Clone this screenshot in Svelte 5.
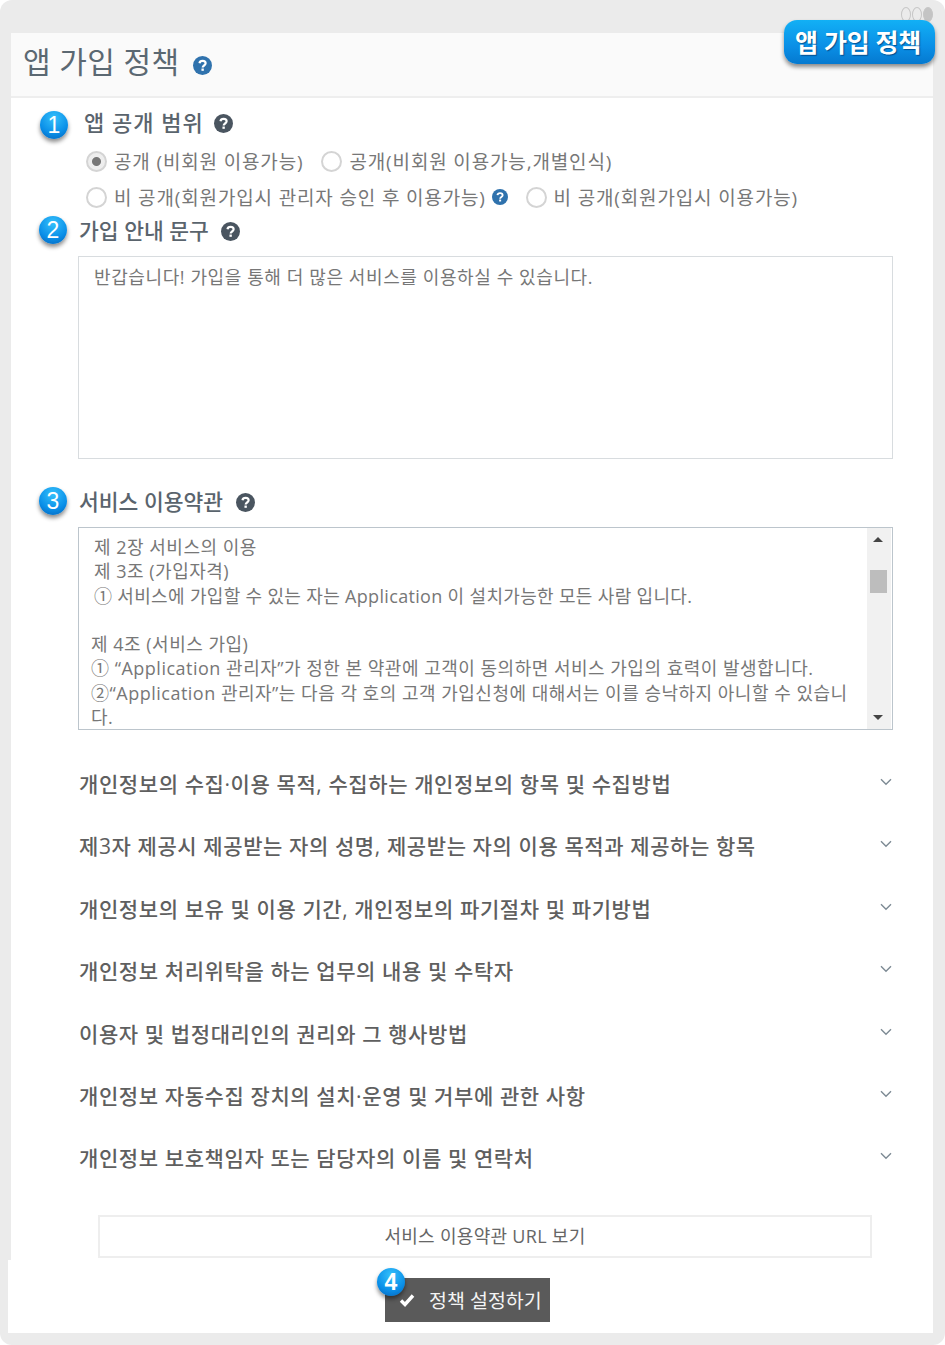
<script>
  const rows = [
    '개인정보의 수집·이용 목적, 수집하는 개인정보의 항목 및 수집방법',
    '제3자 제공시 제공받는 자의 성명, 제공받는 자의 이용 목적과 제공하는 항목',
    '개인정보의 보유 및 이용 기간, 개인정보의 파기절차 및 파기방법',
    '개인정보 처리위탁을 하는 업무의 내용 및 수탁자',
    '이용자 및 법정대리인의 권리와 그 행사방법',
    '개인정보 자동수집 장치의 설치·운영 및 거부에 관한 사항',
    '개인정보 보호책임자 또는 담당자의 이름 및 연락처'
  ];
</script>

{#snippet help(cls)}
  <svg class="help {cls}" viewBox="0 0 20 20" aria-hidden="true">
    <circle cx="10" cy="10" r="10" fill="currentColor" />
    <path d="M6.8 7.6c.3-1.7 1.6-2.5 3.3-2.5 1.8 0 3.2 1 3.2 2.6 0 2.3-3.1 2.3-3.1 4.4" fill="none" stroke="#fff" stroke-width="2.3" />
    <rect x="8.9" y="13.2" width="2.5" height="2.4" fill="#fff" />
  </svg>
{/snippet}

{#snippet radio(checked)}
  <span class="radio" class:checked></span>
{/snippet}

<div class="frame">
  <div class="dots"><i></i><i></i><i></i></div>
  <div class="pill">앱 가입 정책</div>

  <header class="head">
    <h1>앱 가입 정책</h1>
    {@render help('blue title-help')}
  </header>

  <main class="body">
    <section class="scope">
      <span class="badge b1">1</span>
      <h2>앱 공개 범위 {@render help('dark')}</h2>
      <div class="radios">
        <label class="first">{@render radio(true)}공개 (비회원 이용가능)</label>
        <label>{@render radio(false)}공개(비회원 이용가능,개별인식)</label>
      </div>
      <div class="radios">
        <label class="first">{@render radio(false)}비 공개(회원가입시 관리자 승인 후 이용가능) {@render help('blue small')}</label>
        <label>{@render radio(false)}비 공개(회원가입시 이용가능)</label>
      </div>
    </section>

    <section class="intro">
      <span class="badge b2">2</span>
      <h2>가입 안내 문구 {@render help('dark')}</h2>
      <div class="textbox">반갑습니다! 가입을 통해 더 많은 서비스를 이용하실 수 있습니다.</div>
    </section>

    <section class="terms">
      <span class="badge b3">3</span>
      <h2>서비스 이용약관 {@render help('dark')}</h2>
      <div class="scrollbox">
        <div class="scrolltext">
          <p class="in">제 2장 서비스의 이용</p>
          <p class="in">제 3조 (가입자격)</p>
          <p class="in tight">① 서비스에 가입할 수 있는 자는 Application 이 설치가능한 모든 사람 입니다.</p>
          <p>&nbsp;</p>
          <p>제 4조 (서비스 가입)</p>
          <p>① “Application 관리자”가 정한 본 약관에 고객이 동의하면 서비스 가입의 효력이 발생합니다.</p>
          <p>②“Application 관리자”는 다음 각 호의 고객 가입신청에 대해서는 이를 승낙하지 아니할 수 있습니</p>
          <p>다.</p>
        </div>
        <div class="scrollbar">
          <span class="up"></span>
          <span class="thumb"></span>
          <span class="down"></span>
        </div>
      </div>
    </section>

    <section class="accordion">
      {#each rows as row}
        <div class="row">
          <span>{row}</span>
          <svg viewBox="0 0 12 8" aria-hidden="true"><path d="M1 1.2l5 5 5-5" fill="none" stroke="#7d8a94" stroke-width="1.4" /></svg>
        </div>
      {/each}
    </section>

    <div class="url">서비스 이용약관 URL 보기</div>
  </main>

  <footer class="foot">
    <div class="submit">
      <span class="badge b4">4</span>
      <svg viewBox="0 0 16 14" aria-hidden="true"><path d="M2 7.5l4 4 8-9" fill="none" stroke="#fff" stroke-width="3.4" /></svg>
      정책 설정하기
    </div>
  </footer>
</div>

<style>
  :global(body) {
    background: #fff;
  }

  .frame {
    position: relative;
    box-sizing: border-box;
    width: 945px;
    height: 1345px;
    padding: 33px 12px 12px 11px;
    border-radius: 12px;
    background: #ebebeb;
    color: #555;
    font-family: "Open Sans", "Noto Sans CJK KR", sans-serif;
    display: flex;
    flex-direction: column;
  }

  .dots {
    position: absolute;
    top: 7px;
    right: 12px;
    display: flex;
  }
  .dots i {
    width: 10px;
    height: 15px;
    margin-left: 1px;
    border-radius: 50%;
    border: 1px solid #c6c6c6;
    box-sizing: border-box;
  }
  .dots i:last-child {
    background: #c4c4c4;
  }

  .pill {
    position: absolute;
    top: 20px;
    left: 784px;
    width: 151px;
    height: 44px;
    box-sizing: border-box;
    padding-right: 3px;
    border-radius: 13px;
    background: linear-gradient(#12b0f5, #0a8fe6 60%, #0579cf);
    box-shadow: 0 3px 4px rgba(0, 0, 0, 0.45);
    color: #fff;
    font-size: 25px;
    font-weight: 700;
    letter-spacing: -0.3px;
    line-height: 44px;
    text-align: center;
    text-shadow: 1px 1px 1px rgba(0, 40, 90, 0.6);
  }

  .head {
    height: 65px;
    box-sizing: border-box;
    flex: none;
    background: #fafafa;
    border-bottom: 2px solid #eee;
    padding-left: 12px;
    display: flex;
    align-items: center;
    gap: 14px;
  }
  h1 {
    margin: 0;
    font-size: 30px;
    font-weight: 400;
    letter-spacing: 0.4px;
    line-height: 1;
    color: #5b6872;
    position: relative;
    top: -3px;
  }
  .title-help {
    width: 20px;
    height: 20px;
    position: relative;
    top: 1px;
  }

  .help {
    display: inline-block;
    width: 19px;
    height: 19px;
    vertical-align: -2px;
    margin-left: 7px;
  }
  .blue {
    color: #2f72ad;
    margin-left: 0;
  }
  .dark {
    color: #4a5560;
  }
  .small {
    width: 16px;
    height: 16px;
    margin-left: 0;
    vertical-align: -2px;
  }

  .body {
    flex: 1;
    background: #fff;
    padding: 0 40px 0 67px;
    position: relative;
  }

  section {
    position: relative;
  }

  h2 {
    margin: 0;
    font-size: 21.5px;
    font-weight: 500;
    line-height: 30px;
    color: #5a646d;
    padding-left: 1px;
  }

  .badge {
    position: absolute;
    width: 28px;
    height: 28px;
    border-radius: 50%;
    background: radial-gradient(circle at 50% 25%, #35c0fb, #0a8fe8 60%, #0462b8);
    box-shadow: 0 3px 4px rgba(0, 0, 0, 0.45);
    color: #fff;
    font-family: "Liberation Sans", sans-serif;
    font-size: 23px;
    line-height: 28px;
    text-align: center;
  }
  .b1 { left: -38px; top: 13px; }
  .b2 { left: -39px; top: 0; }
  .b3 { left: -39px; top: 0; }
  .b4 { left: -8px; top: -10px; font-weight: 700; }

  .scope {
    padding-top: 9px;
  }
  .scope h2 {
    padding-left: 6px;
    font-size: 22px;
    letter-spacing: 1px;
  }
  .scope h2 .help {
    margin-left: 4px;
  }

  .radios {
    display: flex;
    height: 36px;
    align-items: center;
    padding-left: 8px;
    font-size: 19px;
    font-weight: 400;
    letter-spacing: 0.85px;
    color: #777;
  }
  .radios:first-of-type {
    margin-top: 6px;
  }
  .radios label {
    display: flex;
    align-items: center;
    white-space: pre;
  }
  .first {
    margin-right: 18px;
  }
  .radio {
    width: 21px;
    height: 21px;
    box-sizing: border-box;
    margin-right: 7px;
    border-radius: 50%;
    border: 2px solid #d4d4d4;
    background: #fff;
    flex: none;
  }
  .radio.checked {
    background: radial-gradient(circle, #777 0 4px, #eee 5px);
  }

  .intro {
    margin-top: 1px;
  }
  .textbox {
    box-sizing: border-box;
    width: 815px;
    height: 203px;
    margin-top: 10px;
    padding: 8px 15px;
    border: 1px solid #d8dcdf;
    font-size: 18px;
    font-weight: 400;
    letter-spacing: 0.6px;
    line-height: 24px;
    color: #777;
  }

  .terms {
    margin-top: 28px;
  }
  .scrollbox {
    box-sizing: border-box;
    width: 815px;
    height: 203px;
    margin-top: 10px;
    border: 1px solid #bcc5cc;
    display: flex;
    overflow: hidden;
  }
  .scrolltext {
    flex: 1;
    padding: 7px 0 0 12px;
    font-size: 18px;
    font-weight: 400;
    letter-spacing: 0.5px;
    line-height: 24.3px;
    color: #777;
  }
  .scrolltext p {
    margin: 0;
    white-space: nowrap;
  }
  .in {
    padding-left: 3px;
  }
  .scrolltext .tight {
    letter-spacing: 0.33px;
  }
  .scrollbar {
    flex: none;
    width: 24px;
    margin-right: 1px;
    background: #f1f1f1;
    position: relative;
  }
  .up, .down {
    position: absolute;
    left: 6px;
    border-left: 5px solid transparent;
    border-right: 5px solid transparent;
  }
  .up {
    top: 9px;
    border-bottom: 5px solid #444;
  }
  .down {
    bottom: 9px;
    border-top: 5px solid #444;
  }
  .thumb {
    position: absolute;
    top: 42px;
    left: 3px;
    width: 17px;
    height: 23px;
    background: #bdbdbd;
  }

  .accordion {
    margin-top: 23px;
  }
  .row {
    height: 62.4px;
    box-sizing: border-box;
    display: flex;
    justify-content: space-between;
    padding-left: 1px;
    font-size: 21px;
    font-weight: 500;
    letter-spacing: 0.6px;
    line-height: 62.4px;
    color: #5f5f5f;
  }
  .row svg {
    width: 12px;
    height: 8px;
    margin-top: 25px;
    margin-right: 1px;
  }

  .url {
    box-sizing: border-box;
    width: 774px;
    height: 43px;
    margin: 25px 0 0 20px;
    border: 2px solid #eee;
    font-size: 18px;
    font-weight: 400;
    letter-spacing: 0.3px;
    line-height: 39px;
    text-align: center;
    color: #666;
  }

  .foot {
    flex: none;
    height: 73px;
    margin-left: -3px;
    background: #fff;
    position: relative;
    display: flex;
    justify-content: center;
    padding-top: 18px;
    box-sizing: border-box;
  }
  .submit {
    position: relative;
    left: -3px;
    width: 165px;
    height: 44px;
    background: #5a5a5a;
    color: #f4f4f4;
    font-size: 19.5px;
    font-weight: 400;
    line-height: 43px;
    display: flex;
    align-items: center;
    gap: 14px;
    padding-left: 14px;
    box-sizing: border-box;
  }
  .submit svg {
    width: 16px;
    height: 14px;
  }
</style>
